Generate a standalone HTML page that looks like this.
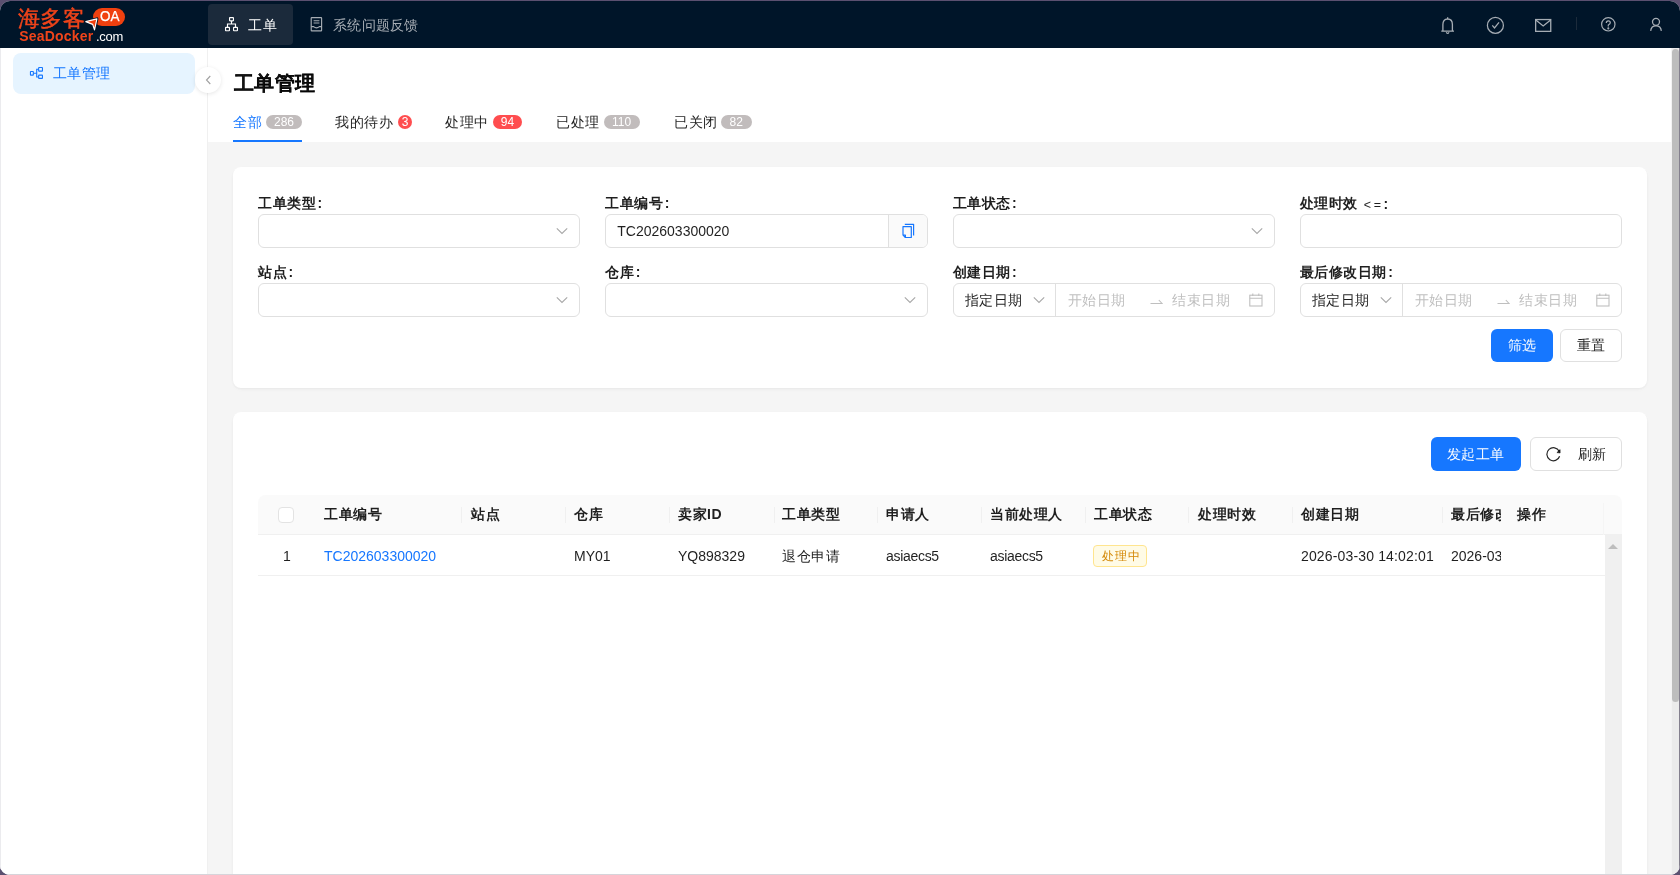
<!DOCTYPE html>
<html><head><meta charset="utf-8">
<style>
*{box-sizing:border-box;margin:0;padding:0}
html,body{width:1680px;height:875px;overflow:hidden;background:#5b5070}
body{font-family:"Liberation Sans",sans-serif;font-size:14px;color:rgba(0,0,0,.88);position:relative;letter-spacing:.5px}
.ln{letter-spacing:0}
.abs{position:absolute}
#win{will-change:transform;position:absolute;left:0;top:1px;width:1680px;height:874px;background:#fff;border-radius:10px;overflow:hidden}
#hdr{position:absolute;left:0;top:0;width:1680px;height:47px;background:#001529}
.nav{position:absolute;top:3px;height:41px;border-radius:4px;color:#a6adb4;font-size:14px;line-height:41px}
#side{position:absolute;left:0;top:47px;width:208px;height:827px;background:#fff;border-right:1px solid #f0f0f0}
#main{position:absolute;left:208px;top:47px;width:1463px;height:827px;background:#f5f5f5}
.card{position:absolute;background:#fff;border-radius:8px;box-shadow:0 1px 2px 0 rgba(0,0,0,.03),0 1px 6px -1px rgba(0,0,0,.02),0 2px 4px 0 rgba(0,0,0,.02)}
.cl{margin-left:1.5px}
.lbl{position:absolute;font-weight:bold;font-size:14px;line-height:23px;color:rgba(0,0,0,.88)}
.inp{position:absolute;height:34px;border:1px solid #e0e0e0;border-radius:6px;background:#fff}
.chev{position:absolute;right:11px;top:10px;width:12px;height:12px}
.btn{position:absolute;height:33px;border-radius:6px;font-size:14px;line-height:31px;text-align:center}
.th{position:absolute;top:0;height:39px;line-height:39px;font-weight:bold;color:rgba(0,0,0,.88)}
.sep{position:absolute;top:12px;width:1px;height:16px;background:#f0f0f0}
.td{position:absolute;top:40px;height:40px;line-height:42px}
.badge{display:inline-block;letter-spacing:0;height:14px;line-height:14px;border-radius:7px;color:#fff;font-size:12px;text-align:center;vertical-align:middle}
</style></head><body>
<div id="win">
  <div id="hdr">
    <div class="abs" style="left:17.5px;top:5.5px;font-size:21.5px;line-height:24px;color:#f0441a;font-weight:400;letter-spacing:0.8px;-webkit-text-stroke:0.45px #f0441a">海多客</div>
    
    <div class="abs" style="left:93px;top:7px;width:31.8px;height:17.5px;border-radius:9px;background:#f0400f;color:#fff;font-size:14.5px;line-height:18px;letter-spacing:0"><span style="position:absolute;left:7.2px;top:-0.9px;transform:scaleX(0.93);transform-origin:0 0;-webkit-text-stroke:0.25px #fff">OA</span></div>
    <svg class="abs" style="left:83px;top:15px" width="17" height="17" viewBox="0 0 17 17" stroke-linejoin="round"><path d="M2.8 5.6L13.9 2.9L11.5 13.9L9.7 8.4Z" fill="#f0400f" stroke="#001529" stroke-width="3"/><path d="M2.8 5.6L13.9 2.9L11.5 13.9L9.7 8.4Z" fill="#f0400f" stroke="#fff" stroke-width="1.15"/></svg>
    <div class="abs" style="left:19.2px;top:26.6px;font-size:14px;line-height:16px;color:#f0441a;font-weight:bold;letter-spacing:0.2px">SeaDocker</div>
    <div class="abs" style="left:96px;top:27.6px;font-size:13px;line-height:16px;color:#fff;letter-spacing:-0.3px">.com</div>
    <div class="nav" style="left:208px;width:85px;background:#1b2a3b;color:#fff"></div>
    <svg class="abs" style="left:224px;top:15px" width="15" height="16" viewBox="0 0 15 16" fill="none" stroke="#fff" stroke-width="1.15"><rect x="5.55" y="1.55" width="3.9" height="3.3" rx="0.5"/><rect x="1.55" y="11.3" width="3.9" height="3.4" rx="0.5"/><rect x="9.55" y="11.3" width="3.9" height="3.4" rx="0.5"/><path d="M7.5 4.9V8H3.5V11.3M7.5 8H11.5V11.3"/></svg>
    <div class="abs" style="left:248px;top:12.5px;line-height:22px;color:#fff">工单</div>
    <svg class="abs" style="left:310.3px;top:15px" width="13" height="16" viewBox="0 0 13 16" fill="none" stroke="#a6adb4" stroke-width="1.15"><rect x="1.2" y="1.6" width="10.4" height="13.2" rx="0.6"/><path d="M3.6 4.7H9.4M3.6 7H9.4M1.2 10.6H3.6Q6.5 13 9.4 10.6H11.8"/></svg>
    <div class="abs" style="left:333px;top:12.5px;line-height:22px;color:#a6adb4;letter-spacing:0.25px">系统问题反馈</div>
    <svg class="abs" style="left:1440px;top:16px" width="16" height="18" viewBox="0 0 16 18" fill="none" stroke="#a6adb4" stroke-width="1.3"><path d="M7.65 0.2V2M2.9 14.2V7.6Q2.9 2 7.65 2Q12.4 2 12.4 7.6V14.2M1.3 14.2H14M6.3 15.2Q7.65 17.6 9 15.2"/></svg>
    <svg class="abs" style="left:1486px;top:15px" width="19" height="19" viewBox="0 0 19 19" fill="none" stroke="#a6adb4" stroke-width="1.25"><circle cx="9.4" cy="9.4" r="8"/><path d="M6.3 9.3L8.5 11.9L13 6.3"/></svg>
    <svg class="abs" style="left:1534px;top:17px" width="19" height="16" viewBox="0 0 19 16" fill="none" stroke="#a6adb4" stroke-width="1.3"><rect x="1.65" y="1.55" width="15.1" height="11.8"/><path d="M1.8 1.9L9.2 7.9L16.6 1.9"/></svg>
    <div class="abs" style="left:1576px;top:16px;width:1px;height:13px;background:#1c2b3b"></div>
    <svg class="abs" style="left:1600px;top:15px" width="17" height="17" viewBox="0 0 17 17" fill="none" stroke="#a6adb4" stroke-width="1.2"><circle cx="8.3" cy="8.3" r="6.7"/><path d="M6.3 7Q6.3 4.9 8.3 4.9Q10.3 4.9 10.3 6.8Q10.3 8 8.3 9V10.6"/><circle cx="8.3" cy="12.4" r="0.45" fill="#a6adb4"/></svg>
    <svg class="abs" style="left:1649px;top:16px" width="14" height="15" viewBox="0 0 14 15" fill="none" stroke="#a6adb4" stroke-width="1.3"><circle cx="7" cy="4.85" r="3.5"/><path d="M1.65 13.8Q2.3 8.9 7 8.9Q11.7 8.9 12.35 13.8"/></svg>
  </div>
  <div id="side">
    <div class="abs" style="left:12.5px;top:5px;width:182px;height:41px;border-radius:8px;background:#e6f4ff"></div>
    <svg class="abs" style="left:29px;top:18px" width="15" height="14" viewBox="0 0 15 14" fill="none" stroke="#1677ff" stroke-width="1.1"><rect x="1.45" y="5.45" width="2.9" height="3.7" rx="0.4"/><rect x="9.65" y="1.55" width="3.8" height="3.6" rx="0.4"/><rect x="9.65" y="9.15" width="3.8" height="3.2" rx="0.4"/><path d="M4.4 7.3H7.7M9.6 3.3H7.7V11H9.6"/></svg>
    <div class="abs" style="left:52.5px;top:14px;line-height:22px;color:#1677ff">工单管理</div>
  </div>
  <div class="abs" style="left:195px;top:66px;width:26px;height:26px;border-radius:13px;background:#fff;box-shadow:0 1px 4px rgba(0,0,0,.10);z-index:5"><svg class="abs" style="left:9.5px;top:7.5px" width="7" height="10" viewBox="0 0 7 10" fill="none" stroke="#a0a0a0" stroke-width="1.1"><path d="M5.3 1L1.5 5L5.3 9"/></svg></div>
  <div id="main">
    <div class="abs" style="left:0;top:0;width:1463px;height:94px;background:#fff"></div>
    <div class="abs" style="left:26px;top:21px;font-size:20px;line-height:28px;font-weight:bold;letter-spacing:0.3px;-webkit-text-stroke:0.15px rgba(0,0,0,.88);color:rgba(0,0,0,.88)">工单管理</div>
    <div class="abs" style="left:25px;top:63px;line-height:22px;color:#1677ff">全部<span class="badge" style="margin-left:4px;width:36px;background:#c1bcbc;margin-top:-2px">286</span></div>
    <div class="abs" style="left:25px;top:92px;width:69px;height:2px;background:#1677ff"></div>
    <div class="abs" style="left:127px;top:63px;line-height:22px">我的待办<span class="badge" style="margin-left:5px;width:14px;background:#ff4d4f;margin-top:-2px">3</span></div>
    <div class="abs" style="left:237px;top:63px;line-height:22px">处理中<span class="badge" style="margin-left:4.3px;width:29.5px;background:#ff4d4f;margin-top:-2px">94</span></div>
    <div class="abs" style="left:348px;top:63px;line-height:22px">已处理<span class="badge" style="margin-left:4px;width:36px;background:#c1bcbc;margin-top:-2px">110</span></div>
    <div class="abs" style="left:466px;top:63px;line-height:22px">已关闭<span class="badge" style="margin-left:3.5px;width:30.5px;background:#c1bcbc;margin-top:-2px">82</span></div>

    <div class="card" style="left:25px;top:119px;width:1414px;height:220.5px">
      <div class="lbl" style="left:25px;top:25px">工单类型<span class="cl">:</span></div>
      <div class="inp" style="left:25px;top:47px;width:322.25px"><svg class="chev" viewBox="0 0 12 12" fill="none" stroke="#a8a8a8" stroke-width="1.1"><path d="M0.8 3.3L6 8.5L11.2 3.3"/></svg></div>
      <div class="lbl" style="left:372.25px;top:25px">工单编号<span class="cl">:</span></div>
      <div class="inp" style="left:372.25px;top:47px;width:322.25px;line-height:32px;padding-left:11px;overflow:hidden"><span class="ln">TC202603300020</span><div class="abs" style="right:0;top:0;width:39px;height:32px;background:#fafafa;border-left:1px solid #e0e0e0"><svg class="abs" style="left:12.5px;top:8px" width="15" height="16" viewBox="0 0 15 16" fill="none" stroke="#1677ff" stroke-width="1.2" stroke-linejoin="round"><path d="M3.8 1.3H12.6V12.6"/><path d="M2 3.6H10.3V14.5H4.4L2 12.1Z"/><path d="M2 12.1H4.4V14.5"/></svg></div></div>
      <div class="lbl" style="left:719.5px;top:25px">工单状态<span class="cl">:</span></div>
      <div class="inp" style="left:719.5px;top:47px;width:322.25px"><svg class="chev" viewBox="0 0 12 12" fill="none" stroke="#a8a8a8" stroke-width="1.1"><path d="M0.8 3.3L6 8.5L11.2 3.3"/></svg></div>
      <div class="lbl" style="left:1066.75px;top:25px">处理时效 <span class="ln" style="font-weight:normal;font-size:12.5px;letter-spacing:2.8px;margin-left:1.5px;position:relative;top:0.5px">&lt;=</span><span class="cl" style="margin-left:-0.3px;position:relative;top:0.5px">:</span></div>
      <div class="inp" style="left:1066.75px;top:47px;width:322.25px"></div>

      <div class="lbl" style="left:25px;top:94px">站点<span class="cl">:</span></div>
      <div class="inp" style="left:25px;top:116px;width:322.25px"><svg class="chev" viewBox="0 0 12 12" fill="none" stroke="#a8a8a8" stroke-width="1.1"><path d="M0.8 3.3L6 8.5L11.2 3.3"/></svg></div>
      <div class="lbl" style="left:372.25px;top:94px">仓库<span class="cl">:</span></div>
      <div class="inp" style="left:372.25px;top:116px;width:322.25px"><svg class="chev" viewBox="0 0 12 12" fill="none" stroke="#a8a8a8" stroke-width="1.1"><path d="M0.8 3.3L6 8.5L11.2 3.3"/></svg></div>
      <div class="lbl" style="left:719.5px;top:94px">创建日期<span class="cl">:</span></div>
      <div class="inp" style="left:719.5px;top:116px;width:322.25px;line-height:32px">
        <div class="abs" style="left:11px;top:0">指定日期</div>
        <svg class="abs" style="left:79.5px;top:10px" width="12" height="12" viewBox="0 0 12 12" fill="none" stroke="#a8a8a8" stroke-width="1.1"><path d="M0.8 3.3L6 8.5L11.2 3.3"/></svg>
        <div class="abs" style="left:101px;top:0;width:1px;height:32px;background:#e0e0e0"></div>
        <div class="abs" style="left:114px;top:0;color:#bfbfbf">开始日期</div>
        <svg class="abs" style="left:196.5px;top:14px" width="13" height="7" viewBox="0 0 13 7" fill="none" stroke="#bfbfbf" stroke-width="1.1"><path d="M0.5 5.5H12L8.8 2"/></svg>
        <div class="abs" style="left:218.5px;top:0;color:#bfbfbf">结束日期</div>
        <svg class="abs" style="left:295px;top:9px" width="14" height="14" viewBox="0 0 14 14" fill="none" stroke="#bfbfbf" stroke-width="1.1"><rect x="0.8" y="2.2" width="12.2" height="10.8"/><path d="M0.8 5.2H13M3.8 0.6V3M9.8 0.6V3"/></svg>
      </div>
      <div class="lbl" style="left:1066.75px;top:94px">最后修改日期<span class="cl">:</span></div>
      <div class="inp" style="left:1066.75px;top:116px;width:322.25px;line-height:32px">
        <div class="abs" style="left:11px;top:0">指定日期</div>
        <svg class="abs" style="left:79.5px;top:10px" width="12" height="12" viewBox="0 0 12 12" fill="none" stroke="#a8a8a8" stroke-width="1.1"><path d="M0.8 3.3L6 8.5L11.2 3.3"/></svg>
        <div class="abs" style="left:101px;top:0;width:1px;height:32px;background:#e0e0e0"></div>
        <div class="abs" style="left:114px;top:0;color:#bfbfbf">开始日期</div>
        <svg class="abs" style="left:196.5px;top:14px" width="13" height="7" viewBox="0 0 13 7" fill="none" stroke="#bfbfbf" stroke-width="1.1"><path d="M0.5 5.5H12L8.8 2"/></svg>
        <div class="abs" style="left:218.5px;top:0;color:#bfbfbf">结束日期</div>
        <svg class="abs" style="left:295px;top:9px" width="14" height="14" viewBox="0 0 14 14" fill="none" stroke="#bfbfbf" stroke-width="1.1"><rect x="0.8" y="2.2" width="12.2" height="10.8"/><path d="M0.8 5.2H13M3.8 0.6V3M9.8 0.6V3"/></svg>
      </div>
      <div class="btn" style="left:1258px;top:162px;width:62px;background:#1677ff;color:#fff;line-height:33px">筛选</div>
      <div class="btn" style="left:1327px;top:162px;width:62px;border:1px solid #e0e0e0;background:#fff">重置</div>
    </div>

    <div class="card" style="left:25px;top:364px;width:1414px;height:480px">
      <div class="btn" style="left:1197.7px;top:25px;width:90px;height:34px;background:#1677ff;color:#fff;line-height:34px">发起工单</div>
      <div class="btn" style="left:1296.5px;top:25px;width:92.5px;height:34px;border:1px solid #e0e0e0;background:#fff;line-height:32px">
        <svg class="abs" style="left:14px;top:7.7px" width="17" height="16" viewBox="0 0 17 16" fill="none" stroke="rgba(0,0,0,.85)" stroke-width="1.2"><path d="M14.2 5.3A6.5 6.5 0 1 0 14.6 10.2"/><path d="M15.1 3.6V7L11.9 6.6Z" fill="rgba(0,0,0,.85)" stroke-width="0.6"/></svg>
        <div class="abs" style="left:47.3px;top:-0.5px">刷新</div>
      </div>
      <div class="abs" id="tbl" style="left:25px;top:83px;width:1364px;height:400px">
        <div class="abs" style="left:0;top:0;width:1364px;height:40px;background:#fafafa;border-radius:8px 8px 0 0;border-bottom:1px solid #f0f0f0"></div>
        <div class="abs" style="left:20px;top:12px;width:16px;height:16px;border:1px solid #e3e3e3;border-radius:4px;background:#fff"></div>
        <div class="th" style="left:66px">工单编号</div><div class="sep" style="left:203px"></div>
        <div class="th" style="left:213px">站点</div><div class="sep" style="left:307px"></div>
        <div class="th" style="left:316px">仓库</div><div class="sep" style="left:411px"></div>
        <div class="th" style="left:420px">卖家ID</div><div class="sep" style="left:516px"></div>
        <div class="th" style="left:524px">工单类型</div><div class="sep" style="left:619px"></div>
        <div class="th" style="left:628px">申请人</div><div class="sep" style="left:723px"></div>
        <div class="th" style="left:732px">当前处理人</div><div class="sep" style="left:827px"></div>
        <div class="th" style="left:836px">工单状态</div><div class="sep" style="left:930px"></div>
        <div class="th" style="left:940px">处理时效</div><div class="sep" style="left:1034px"></div>
        <div class="th" style="left:1043px">创建日期</div><div class="sep" style="left:1184px"></div>
        <div class="abs" style="left:1193px;top:0;width:50px;height:39px;overflow:hidden"><div class="th" style="left:0;white-space:nowrap">最后修改日期</div></div>
        <div class="th" style="left:1259px">操作</div><div class="abs" style="left:1345px;top:8px;width:1px;height:32px;background:#f5f5f5"></div>
        <div class="td" style="left:25px" ><span class="ln">1</span></div>
        <div class="td" style="left:66px;color:#1677ff" ><span class="ln">TC202603300020</span></div>
        <div class="td" style="left:316px" ><span class="ln">MY01</span></div>
        <div class="td" style="left:420px" ><span class="ln">YQ898329</span></div>
        <div class="td" style="left:524px">退仓申请</div>
        <div class="td" style="left:628px" ><span class="ln" style="letter-spacing:-0.3px">asiaecs5</span></div>
        <div class="td" style="left:732px" ><span class="ln" style="letter-spacing:-0.3px">asiaecs5</span></div>
        <div class="abs" style="left:835px;top:50px;width:54px;height:22px;border:1px solid #ffe58f;background:#fffbe6;border-radius:4px;color:#d48806;font-size:12px;line-height:20px;padding-left:8.2px;letter-spacing:.75px">处理中</div>
        <div class="td" style="left:1043px" ><span class="ln" style="letter-spacing:0.15px">2026-03-30 14:02:01</span></div>
        <div class="abs" style="left:1193px;top:40px;width:50px;height:40px;overflow:hidden"><div class="td" style="left:0;top:0;white-space:nowrap" ><span class="ln">2026-03-30 14:02:01</span></div></div>
        <div class="abs" style="left:0;top:80px;width:1347px;height:1px;background:#f0f0f0"></div>
        <div class="abs" style="left:1347px;top:40px;width:17px;height:400px;background:#f0f0f0"></div>
        <svg class="abs" style="left:1350px;top:48px" width="10" height="6" viewBox="0 0 10 6"><path d="M0 6L5 1L10 6Z" fill="#bdbdbd"/></svg>
      </div>
    </div>
  </div>
  <div class="abs" style="left:1671px;top:47px;width:1px;height:827px;background:#f3f3f3"></div><div class="abs" style="left:1672px;top:47px;width:7px;height:827px;background:#ebebeb"></div>
  <div class="abs" style="left:1672px;top:48px;width:7px;height:653px;background:#bdbdbd;border-radius:3.5px"></div>
  <div class="abs" style="left:1679px;top:47px;width:1px;height:827px;background:#84808e"></div>
  <div class="abs" style="left:0;top:47px;width:1px;height:827px;background:#ebebee;z-index:9"></div>
  <div class="abs" style="left:0;top:873px;width:1680px;height:1px;background:#d6d4da;z-index:9"></div>
</div>
</body></html>
